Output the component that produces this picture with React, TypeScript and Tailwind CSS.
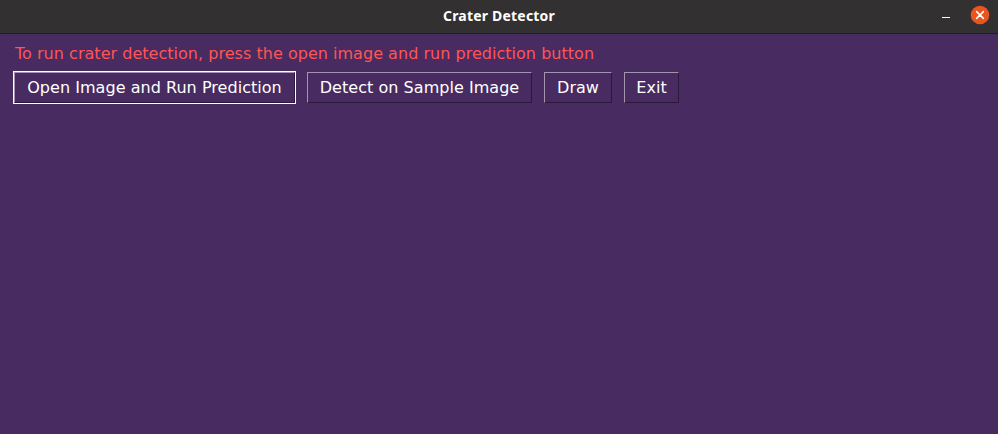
const btn =
  "flex items-center justify-center text-white text-[16px] leading-[30px] tracking-[0.04px] whitespace-nowrap border border-t-[#a395b0] border-l-[#a395b0] border-b-[#2b193a] border-r-[#2b193a] h-[31px]";

export default function App() {
  return (
    <div className="flex h-[434px] w-[998px] flex-col overflow-hidden bg-[#482b61] font-['DejaVu_Sans',sans-serif]">
      <header className="grid h-[34px] shrink-0 grid-cols-[1fr_auto_1fr] items-center border-b border-[#1f1d1d] bg-[#323030]">
        <span />
        <h1 className="-mt-[2px] font-['Noto_Sans',sans-serif] text-[14px] font-bold leading-[32px] tracking-[0.2px] text-white">Crater Detector</h1>
        <div className="flex items-center justify-end gap-[20px] pr-[8px]">
          <button aria-label="Minimize" className="mt-[2px] h-px w-[8px] bg-white" />
          <button aria-label="Close" className="-mt-[3px]">
            <svg width="20" height="20" viewBox="0 0 20 20" className="block">
              <circle cx="10" cy="10" r="9.3" fill="#e95420" />
              <path d="M6.6 6.6l6.8 6.8M13.4 6.6l-6.8 6.8" stroke="white" strokeWidth="1.5" strokeLinecap="round" />
            </svg>
          </button>
        </div>
      </header>
      <main className="flex flex-col pl-[13px] pt-[10px]">
        <p className="pl-[2px] text-[16px] leading-[19px] tracking-[0.028px] text-[#ff5555]">To run crater detection, press the open image and run prediction button</p>
        <div className="mt-[8px] flex items-center gap-[12px]">
          <div className="-mr-px border border-white">
            <button className={`${btn} w-[281px]`}>Open Image and Run Prediction</button>
          </div>
          <button className={`${btn} w-[225px]`}>Detect on Sample Image</button>
          <button className={`${btn} w-[68px]`}>Draw</button>
          <button className={`${btn} w-[55px]`}>Exit</button>
        </div>
      </main>
    </div>
  );
}
